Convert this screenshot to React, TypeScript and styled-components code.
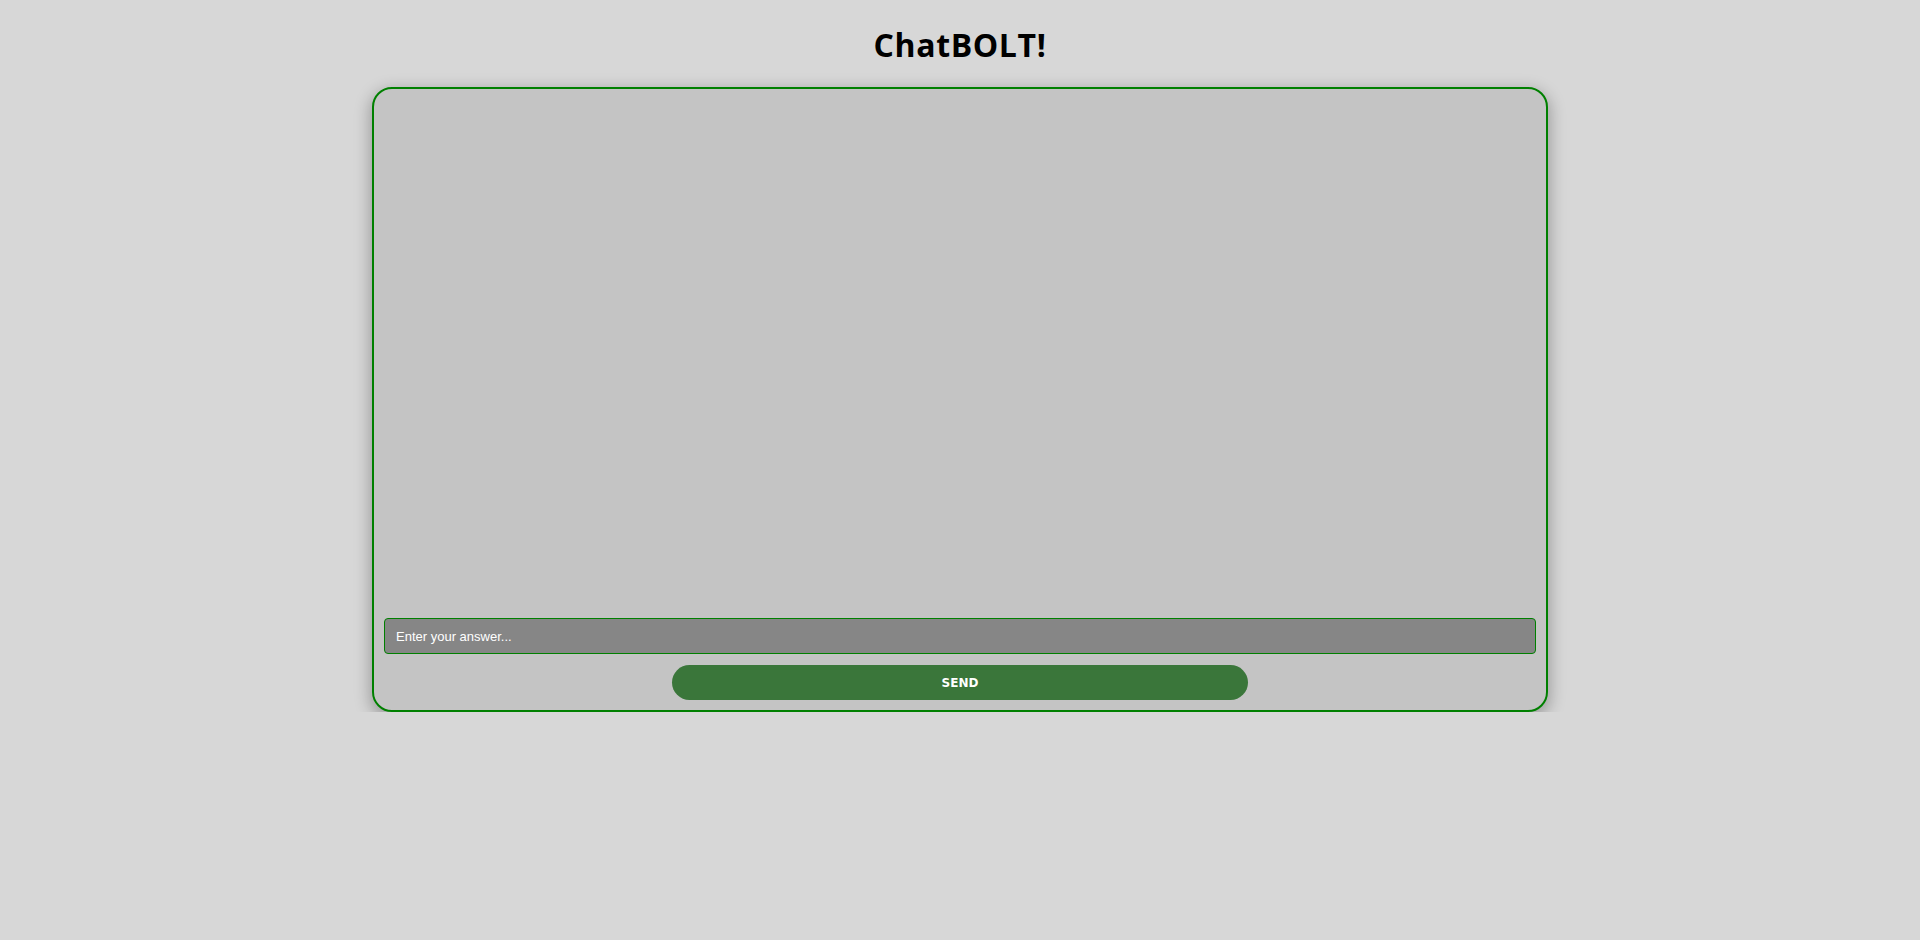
import React from "react";
import styled, { createGlobalStyle } from "styled-components";

const Global = createGlobalStyle`
  html, body { margin: 0; padding: 0; background: #d7d7d7; }
  body { font-family: "Liberation Sans", Arial, sans-serif; }
  * { box-sizing: border-box; }
`;

const Page = styled.div`
  display: flex;
  flex-direction: column;
  align-items: center;
  padding-top: 25px;
`;

const Title = styled.h1`
  margin: 0 0 22px;
  font-family: "Open Sans", "DejaVu Sans", sans-serif;
  font-weight: 700;
  font-size: 32px;
  line-height: 40px;
  color: #000;
  letter-spacing: 0.6px;
`;

const Chat = styled.div`
  width: 1176px;
  border: 2px solid #008000;
  border-radius: 20px;
  background: #c4c4c4;
  padding: 10px;
  box-shadow: 0 5px 16px 2px rgba(0, 0, 0, 0.28);
  display: flex;
  flex-direction: column;
  align-items: center;
`;

const Messages = styled.div`
  width: 100%;
  height: 519px;
`;

const Input = styled.input`
  width: 100%;
  height: 36px;
  border: 1px solid #008000;
  border-radius: 4px;
  background: #868686;
  color: #fff;
  font-family: "Liberation Sans", Arial, sans-serif;
  font-size: 13px;
  padding: 0 11px;
  outline: none;
  &::placeholder { color: #fff; opacity: 1; }
`;

const Send = styled.button`
  margin-top: 11px;
  width: 576px;
  height: 35px;
  border: none;
  border-radius: 18px;
  background: #3a763a;
  color: #fff;
  font-family: "DejaVu Sans", Verdana, sans-serif;
  font-weight: 700;
  font-size: 12px;
  cursor: pointer;
`;

export default function App() {
  return (
    <>
      <Global />
      <Page>
        <Title>ChatBOLT!</Title>
        <Chat>
          <Messages />
          <Input placeholder="Enter your answer..." />
          <Send>SEND</Send>
        </Chat>
      </Page>
    </>
  );
}
